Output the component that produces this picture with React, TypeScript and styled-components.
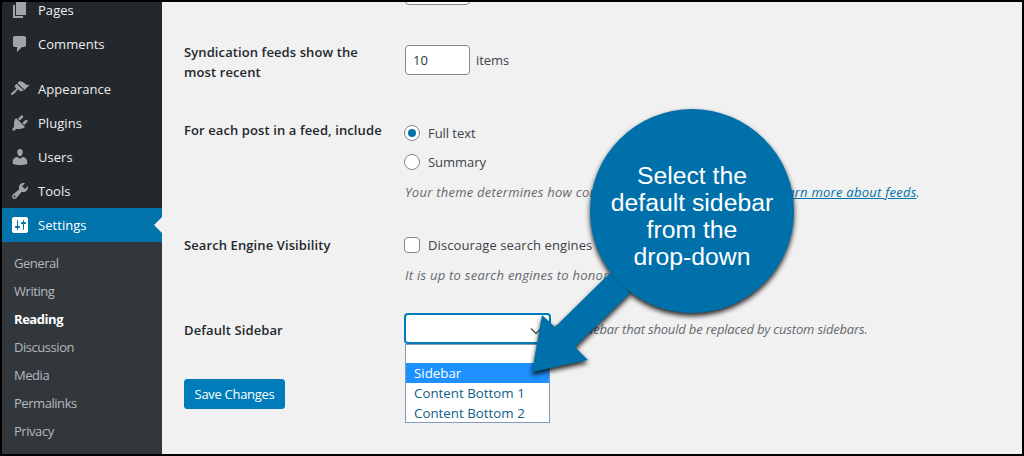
import React from "react";
import styled, { createGlobalStyle } from "styled-components";

const Global = createGlobalStyle`
  html, body { margin: 0; padding: 0; background: #000; }
  body { font-family: "Open Sans", "Noto Sans", sans-serif; font-size: 13px; }
`;

const Frame = styled.div`
  position: relative; box-sizing: border-box; width: 1024px; height: 456px;
  border: 2px solid #000; display: flex; overflow: hidden; background: #f1f1f1;
`;
const Sidebar = styled.nav`
  width: 160px; flex: none; background: #23282d; display: flex; flex-direction: column; overflow: hidden;
`;
const MenuList = styled.div`
  margin-top: -9px; display: flex; flex-direction: column;
`;
const MenuItem = styled.div<{ $active?: boolean; $gap?: boolean }>`
  position: relative; display: flex; align-items: center; height: 34px; flex: none;
  margin-top: ${(p) => (p.$gap ? "11px" : "0")};
  background: ${(p) => (p.$active ? "#0073aa" : "transparent")};
  color: ${(p) => (p.$active ? "#fff" : "#eee")};
  font-size: 13px; letter-spacing: 0.05px;
  svg { width: 20px; height: 20px; margin-left: 8px; margin-right: 8px; fill: ${(p) => (p.$active ? "#fff" : "#a0a5aa")}; flex: none; }
`;
const Notch = styled.span`
  position: absolute; right: 0; top: 9px; width: 0; height: 0;
  border-style: solid; border-width: 8px 8px 8px 0; border-color: transparent #f1f1f1 transparent transparent;
`;
const SubMenu = styled.div`
  flex: 1; background: #32373c; padding: 7px 0; display: flex; flex-direction: column;
`;
const SubItem = styled.div<{ $current?: boolean }>`
  height: 28px; line-height: 28px; padding-left: 12px; font-size: 13px; letter-spacing: -0.45px;
  color: ${(p) => (p.$current ? "#fff" : "#b4b9be")};
  font-weight: ${(p) => (p.$current ? 700 : 400)};
`;
const Main = styled.main`
  flex: 1; padding-left: 22px; color: #3c434a; display: flex; flex-direction: column; overflow: hidden;
`;
const TextInput = styled.input`
  box-sizing: border-box; width: 65px; height: 30px; border: 1px solid #7e8993; border-radius: 4px;
  background: #fff; color: #32373c; font: 13px "Open Sans", sans-serif; padding: 0 7px; margin: 0;
`;
const ClippedInput = styled(TextInput)`
  display: block; flex: none; margin: -27px 0 0 221px;
`;
const Row = styled.div<{ $top: number }>`
  display: grid; grid-template-columns: 221px 1fr; margin-top: ${(p) => p.$top}px; line-height: 20px;
`;
const Label = styled.div`
  font-weight: 600; color: #23282d; font-size: 13px; letter-spacing: 0.1px; width: 200px;
`;
const Field = styled.div`
  display: flex; flex-direction: column; position: relative;
`;
const Inline = styled.label<{ $mt?: number; $ls?: number }>`
  display: flex; align-items: center; height: 20px; margin-top: ${(p) => p.$mt ?? 0}px;
  letter-spacing: ${(p) => p.$ls ?? -0.05}px;
`;
const Radio = styled.input`
  appearance: none; box-sizing: border-box; width: 16px; height: 16px; margin: 0 8px 0 -1px; flex: none;
  border: 1px solid #7e8993; border-radius: 50%; background: #fff; display: grid; place-items: center;
  &:checked::before { content: ""; width: 8px; height: 8px; border-radius: 50%; background: #0073aa; }
`;
const Check = styled.input`
  appearance: none; box-sizing: border-box; width: 16px; height: 16px; margin: 0 8px 0 -1px; flex: none;
  border: 1px solid #7e8993; border-radius: 4px; background: #fff;
`;
const Hint = styled.p<{ $mt?: number; $ls?: number }>`
  margin: ${(p) => p.$mt ?? 0}px 0 0; font-style: italic; color: #646970; white-space: nowrap; line-height: 20px;
  letter-spacing: ${(p) => p.$ls ?? 0.25}px;
  a { color: #0073aa; }
`;
const Items = styled.span`
  margin-left: 6px; letter-spacing: -0.05px;
`;
const InputLine = styled.div`
  display: flex; align-items: center; margin-top: 3px;
`;
const SelectLine = styled.div`
  display: flex; align-items: center; margin-top: -7px; height: 31px;
`;
const SelectBox = styled.div`
  box-sizing: border-box; position: relative; width: 147px; height: 31px; flex: none; margin-left: -1px;
  border: 2px solid #007cba; border-radius: 4px; background: #fff;
  svg { position: absolute; right: 6px; top: 9px; width: 14px; height: 14px; fill: none; stroke: #50575e; stroke-width: 1.5; }
`;
const Dropdown = styled.div`
  position: absolute; left: 0; top: 24px; box-sizing: border-box; width: 145px; height: 79px; background: #fff;
  border: 1px solid #7f9db9; padding-top: 18px; color: #0f5e8a; font-size: 13.33px; z-index: 1;
`;
const Option = styled.div<{ $selected?: boolean }>`
  height: 20px; line-height: 20px; padding-left: 8px;
  background: ${(p) => (p.$selected ? "#1e90ff" : "transparent")};
  color: ${(p) => (p.$selected ? "#fff" : "inherit")};
`;
const SaveButton = styled.button`
  box-sizing: border-box; align-self: flex-start; width: 101px; height: 30px; margin: 35px 0 0; padding: 0;
  border: 1px solid #007cba; border-radius: 3px; background: #007cba; color: #fff;
  font: 13px "Open Sans", sans-serif; letter-spacing: -0.3px;
`;
const Callout = styled.svg`
  position: absolute; left: 518px; top: 98px; width: 300px; height: 300px; overflow: visible; z-index: 2;
  filter: drop-shadow(0 3px 2.5px rgba(0,0,0,.85));
  fill: #0070aa;
`;
const CalloutText = styled.div`
  position: absolute; left: 588px; top: 160px; width: 204px; z-index: 3; text-align: center; color: #fff;
  font: 24.75px/27px "Liberation Sans", Arial, sans-serif;
`;

const paths = {
  pages: "M6 15V2h10v13H6zm-1 1h8v2H3V5h2v11z",
  comments: "M5 2h9c1.1 0 2 .9 2 2v7c0 1.1-.9 2-2 2h-2l-5 5v-5H5c-1.1 0-2-.9-2-2V4c0-1.1.9-2 2-2z",
  appearance: "M14.48 11.06L7.41 3.99l1.5-1.5c.5-.56 2.3-.47 3.51.32 1.21.8 1.43 1.28 2.91 2.1 1.18.64 2.45 1.26 4.45.85zm-.71.71L6.7 4.7 4.93 6.47c-.39.39-.39 1.02 0 1.41l1.06 1.06c.39.39.39 1.03 0 1.42-.6.6-1.43 1.11-2.21 1.69-.35.26-.7.53-1.01.84C1.43 13.23.4 14.98 1.11 15.7s2.47-.32 3.8-1.64c.31-.31.58-.66.84-1.01.58-.78 1.09-1.61 1.69-2.21.39-.39 1.03-.39 1.42 0l1.06 1.06c.39.39 1.02.39 1.41 0z",
  plugins: "M13.11 4.36L9.87 7.6 8 5.73l3.24-3.24c.35-.34 1.05-.2 1.56.32.52.51.66 1.21.31 1.55zm-8 1.77l.91-1.12 9.01 9.01-1.19.84c-.71.71-2.63 1.16-3.82 1.16H6.14L4.9 17.26c-.59.59-1.54.59-2.12 0-.59-.58-.59-1.53 0-2.12l1.24-1.24v-3.88c0-1.13.4-3.19 1.09-3.89zm7.26 3.97l3.24-3.24c.34-.35 1.04-.21 1.55.31.52.51.66 1.21.31 1.55l-3.24 3.25z",
  users: "M10 9.25c-2.27 0-2.73-3.44-2.73-3.44C7 4.02 7.82 2 9.97 2c2.16 0 2.98 2.02 2.71 3.81 0 0-.41 3.44-2.68 3.44zm0 2.57L12.72 10c2.39 0 4.52 2.33 4.52 4.53v2.49s-3.65 1.13-7.24 1.13c-3.65 0-7.24-1.13-7.24-1.13v-2.49c0-2.25 1.94-4.48 4.47-4.48z",
  tools: "M16.68 9.77c-1.34 1.34-3.3 1.67-4.95.99l-5.41 6.52c-.99.99-2.59.99-3.58 0s-.99-2.59 0-3.57l6.52-5.42c-.68-1.65-.35-3.61.99-4.95 1.28-1.28 3.12-1.62 4.72-1.06l-2.89 2.89 2.82 2.82 2.86-2.87c.53 1.58.18 3.39-1.08 4.65zM3.81 16.21c.4.39 1.04.39 1.43 0 .4-.4.4-1.04 0-1.43-.39-.4-1.03-.4-1.43 0-.39.39-.39 1.03 0 1.43z",
  settings: "M18 16V4c0-1.1-.9-2-2-2H4c-1.1 0-2 .9-2 2v12c0 1.1.9 2 2 2h12c1.1 0 2-.9 2-2zM8 11h1c.55 0 1 .45 1 1s-.45 1-1 1H8v1.5c0 .28-.22.5-.5.5s-.5-.22-.5-.5V13H6c-.55 0-1-.45-1-1s.45-1 1-1h1V5.5c0-.28.22-.5.5-.5s.5.22.5.5V11zm5-2h-1c-.55 0-1-.45-1-1s.45-1 1-1h1V5.5c0-.28.22-.5.5-.5s.5.22.5.5V7h1c.55 0 1 .45 1 1s-.45 1-1 1h-1v5.5c0 .28-.22.5-.5.5s-.5-.22-.5-.5V9z",
};

const Icon = ({ d }: { d: string }) => (
  <svg viewBox="0 0 20 20" aria-hidden="true"><path d={d} /></svg>
);

const menu: { label: string; icon: string; gap?: boolean }[] = [
  { label: "Pages", icon: paths.pages },
  { label: "Comments", icon: paths.comments },
  { label: "Appearance", icon: paths.appearance, gap: true },
  { label: "Plugins", icon: paths.plugins },
  { label: "Users", icon: paths.users },
  { label: "Tools", icon: paths.tools },
];
const subs = ["General", "Writing", "Reading", "Discussion", "Media", "Permalinks", "Privacy"];

export default function App() {
  return (
    <>
      <Global />
      <Frame>
        <Sidebar>
          <MenuList>
            {menu.map((m) => (
              <MenuItem key={m.label} $gap={m.gap}><Icon d={m.icon} />{m.label}</MenuItem>
            ))}
            <MenuItem $active><Icon d={paths.settings} />Settings<Notch /></MenuItem>
          </MenuList>
          <SubMenu>
            {subs.map((s) => <SubItem key={s} $current={s === "Reading"}>{s}</SubItem>)}
          </SubMenu>
        </Sidebar>
        <Main>
          <ClippedInput type="text" readOnly />
          <Row $top={37}>
            <Label>Syndication feeds show the most recent</Label>
            <Field>
              <InputLine><TextInput type="text" defaultValue="10" /><Items>items</Items></InputLine>
            </Field>
          </Row>
          <Row $top={38}>
            <Label>For each post in a feed, include</Label>
            <Field>
              <Inline $mt={3}><Radio type="radio" name="feed" defaultChecked />Full text</Inline>
              <Inline $mt={9}><Radio type="radio" name="feed" />Summary</Inline>
              <Hint $mt={10}>Your theme determines how content is displayed in browsers. <a href="#feeds">Learn more about feeds</a>.</Hint>
            </Field>
          </Row>
          <Row $top={33}>
            <Label>Search Engine Visibility</Label>
            <Field>
              <Inline $ls={0.1}><Check type="checkbox" />Discourage search engines from indexing this site</Inline>
              <Hint $mt={10}>It is up to search engines to honor this request.</Hint>
            </Field>
          </Row>
          <Row $top={35}>
            <Label>Default Sidebar</Label>
            <Field>
              <SelectLine>
                <SelectBox>
                  <svg viewBox="0 0 14 14" aria-hidden="true"><path d="M2 4.5l5 5 5-5" /></svg>
                </SelectBox>
                <Hint $ls={-0.18}>&nbsp;The sidebar that should be replaced by custom sidebars.</Hint>
              </SelectLine>
              <Dropdown>
                <Option $selected>Sidebar</Option>
                <Option>Content Bottom 1</Option>
                <Option>Content Bottom 2</Option>
              </Dropdown>
            </Field>
          </Row>
          <SaveButton type="button">Save Changes</SaveButton>
        </Main>
        <Callout viewBox="0 0 300 300" aria-hidden="true">
          <circle cx="172" cy="111" r="102" />
          <polygon points="90,173 35,227 22,215 12,272 68,260 55,247 110,193" />
        </Callout>
        <CalloutText>Select the<br />default sidebar<br />from the<br />drop-down</CalloutText>
      </Frame>
    </>
  );
}
